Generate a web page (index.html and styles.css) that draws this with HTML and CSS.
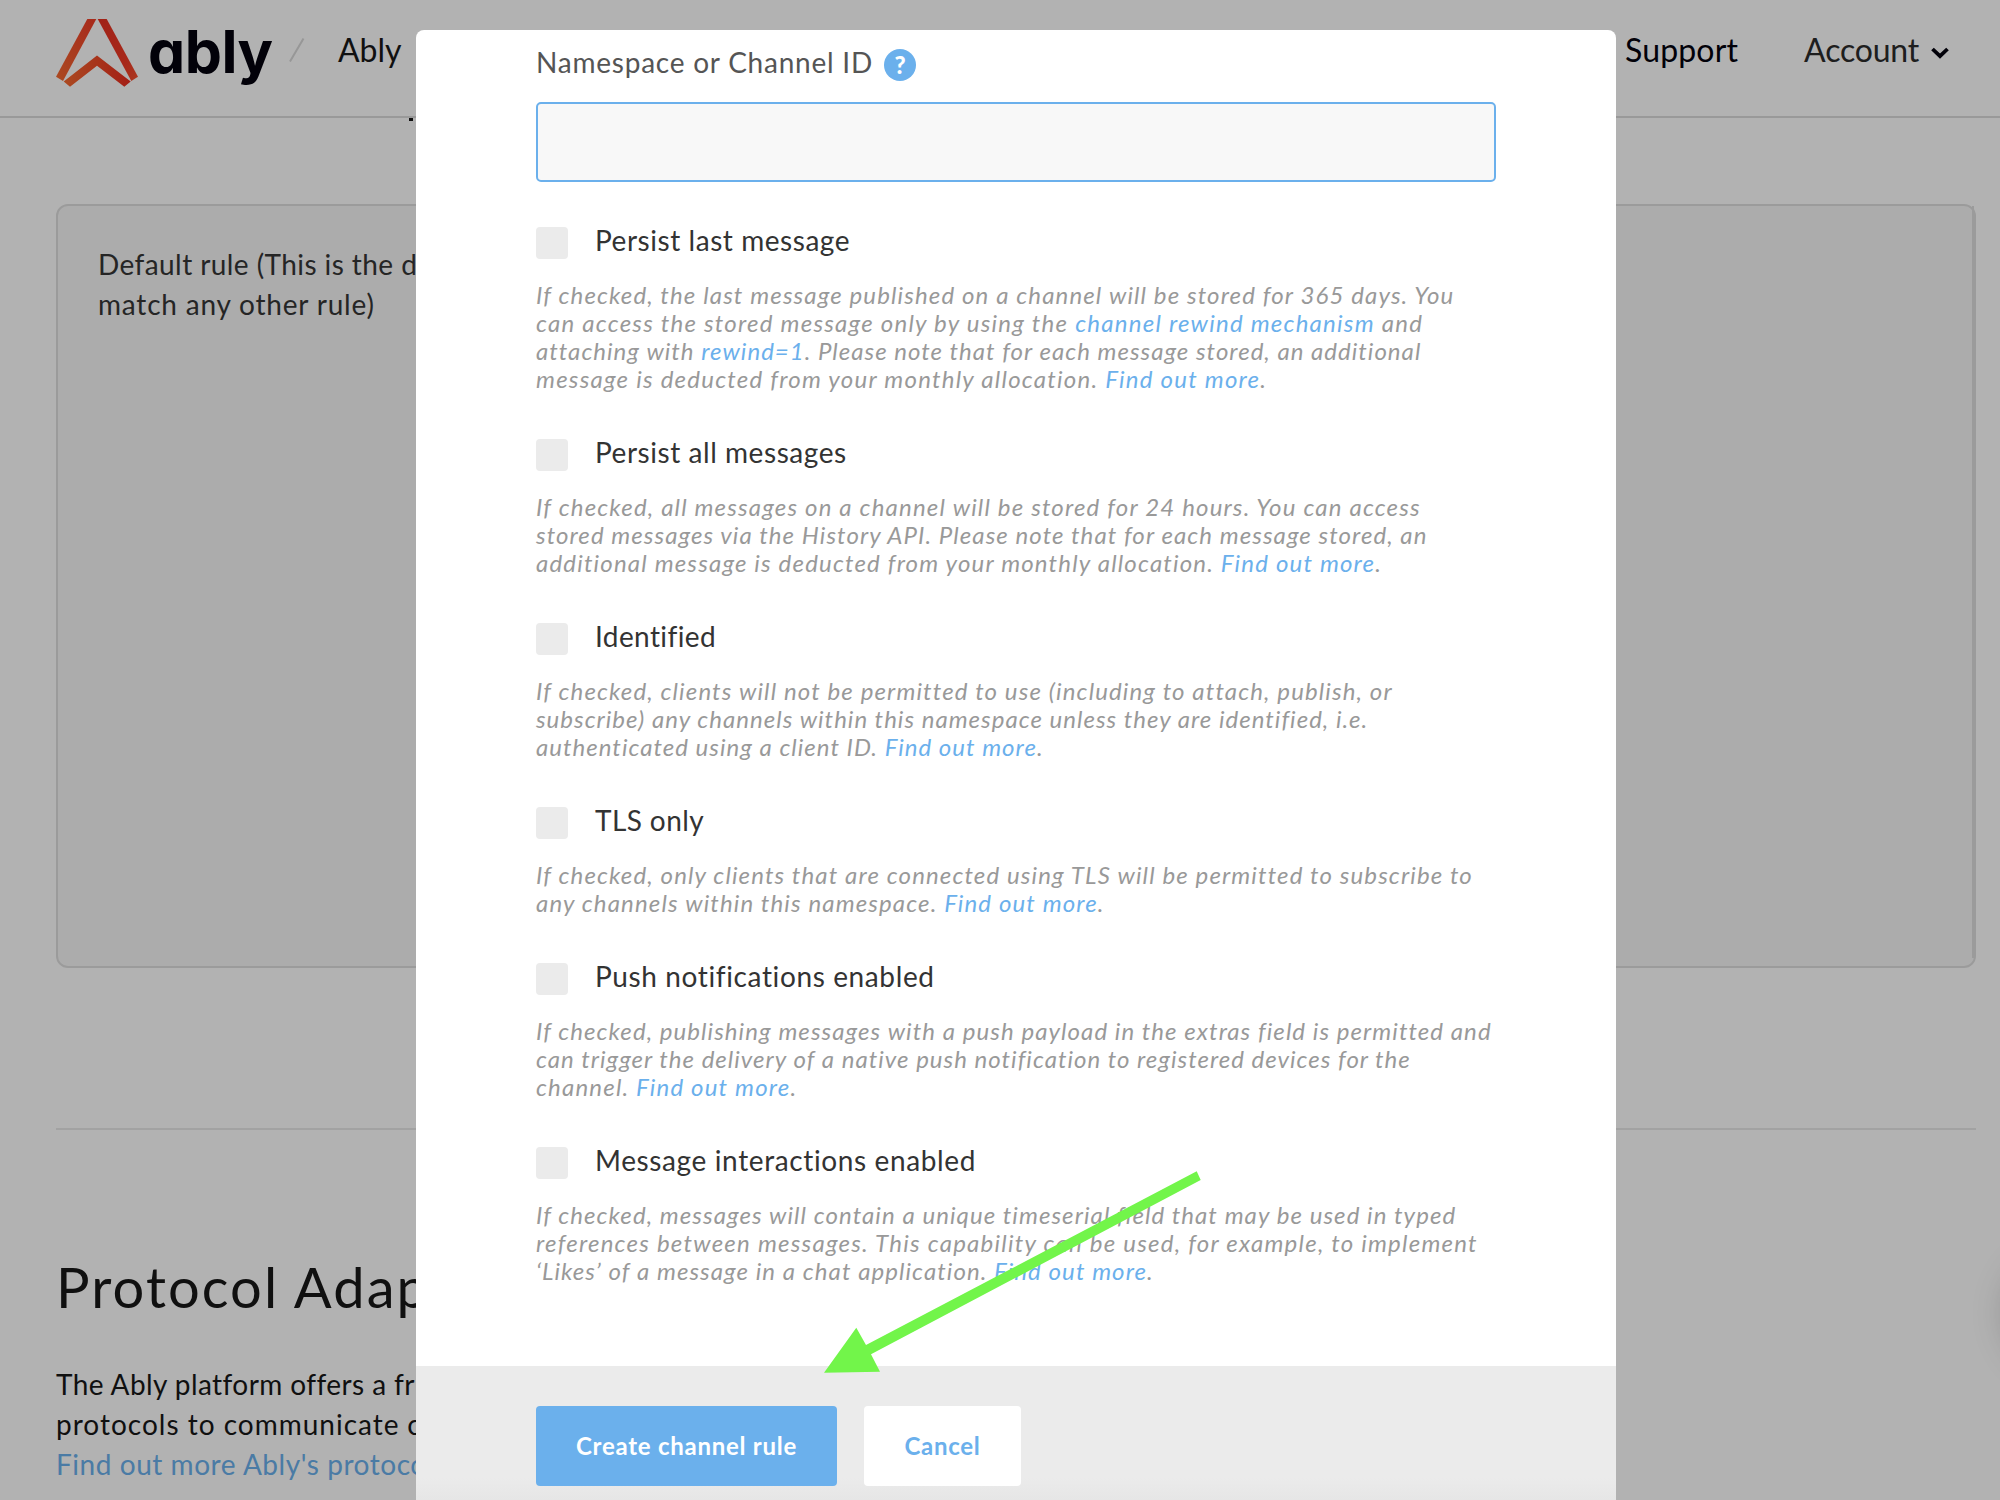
FILE: index.html
```html
<!DOCTYPE html>
<html lang="en">
<head>
<meta charset="utf-8">
<title>Ably – New channel rule</title>
<link rel="stylesheet" href="styles.css">
</head>
<body>
<div class="page">
  <header class="topbar">
    <a class="brand">
      <svg class="brand-mark" viewBox="0 0 82 68">
        <defs>
          <linearGradient id="leg-left" x1="0" y1="1" x2="1" y2="0"><stop offset="0" stop-color="#f56a30"/><stop offset="1" stop-color="#f03c28"/></linearGradient>
          <linearGradient id="leg-right" x1="0" y1="0" x2="1" y2="1"><stop offset="0" stop-color="#e63222"/><stop offset=".7" stop-color="#f03a26"/><stop offset="1" stop-color="#f5522f"/></linearGradient>
          <linearGradient id="chevron" x1="0" y1="0" x2="1" y2="0"><stop offset="0" stop-color="#f56a30"/><stop offset="1" stop-color="#ea2c20"/></linearGradient>
        </defs>
        <path fill="url(#leg-left)" d="M31.3 0H40.3L7 62 0 57.7z"/>
        <path fill="url(#leg-right)" d="M41.7 0H50.7L82 57.7 75.3 62z"/>
        <path fill="url(#chevron)" d="M41 36.6 74.7 62.6 68.3 67.7 41 46.7 14 67.7 7.7 62.6z"/>
      </svg>
      <span class="brand-name">ably</span>
    </a>
    <svg class="slash" viewBox="0 0 16 24"><path d="M1 23.5 14.5.5" fill="none" stroke="#d8d8d8" stroke-width="2"/></svg>
    <span class="crumb">Ably</span>
    <nav class="topnav">
      <a class="nav-dark">Support</a>
      <a class="account">Account
        <svg class="caret" viewBox="0 0 18 12"><path d="M1.5 2 9 9.2 16.5 2" fill="none" stroke="#03020d" stroke-width="3.8"/></svg>
      </a>
    </nav>
  </header>
  <i class="heading-tail"></i>
  <main class="content">
    <section class="rules"><div class="rules-body">
      <p class="rule-name"><span class="narrow">Default rule (This is the d</span><br><span class="wide">match any other rule)</span></p>
    </div></section>
    <section class="protocols">
      <h2>Protocol Adap</h2>
      <p><span class="narrow">The Ably platform offers a fr</span><br><span class="wider">protocols to communicate</span> c<br><a>Find out more Ably's protoco</a></p>
    </section>
  </main>
  <div class="side-widget"></div>
</div>
<div class="overlay">
  <form class="modal">
    <div class="fields">
      <label class="field-label">Namespace or Channel ID <span class="help">?</span></label>
      <input class="text-input" type="text">

      <div class="option">
        <label><span class="box"></span>Persist last message</label>
        <p><span class="s3">If checked, the last message published on a channel will be stored for 365 days. You</span><span class="s5">can access the stored message only by using the <a>channel rewind mechanism</a> and</span><span class="s1">attaching with <a>rewind=1</a>. Please note that for each message stored, an additional</span><span class="s5">message is deducted from your monthly allocation. <a>Find out more</a>.</span></p>
      </div>
      <div class="option">
        <label><span class="box"></span>Persist all messages</label>
        <p><span class="s4">If checked, all messages on a channel will be stored for 24 hours. You can access</span><span class="s2">stored messages via the History API. Please note that for each message stored, an</span><span class="s4">additional message is deducted from your monthly allocation. <a>Find out more</a>.</span></p>
      </div>
      <div class="option">
        <label class="tight"><span class="box"></span>Identified</label>
        <p><span class="s3">If checked, clients will not be permitted to use (including to attach, publish, or</span><span class="s1">subscribe) any channels within this namespace unless they are identified, i.e.</span><span class="s1">authenticated using a client ID. <a>Find out more</a>.</span></p>
      </div>
      <div class="option">
        <label class="tight"><span class="box"></span>TLS only</label>
        <p><span class="s3">If checked, only clients that are connected using TLS will be permitted to subscribe to</span><span class="s3">any channels within this namespace. <a>Find out more</a>.</span></p>
      </div>
      <div class="option">
        <label class="loose"><span class="box"></span>Push notifications enabled</label>
        <p><span class="s2">If checked, publishing messages with a push payload in the extras field is permitted and</span><span class="s1">can trigger the delivery of a native push notification to registered devices for the</span><span class="s4">channel. <a>Find out more</a>.</span></p>
      </div>
      <div class="option">
        <label class="loose"><span class="box"></span>Message interactions enabled</label>
        <p><span class="s2">If checked, messages will contain a unique timeserial field that may be used in typed</span><span class="s5">references between messages. This capability can be used, for example, to implement</span><span class="s2">‘Likes’ of a message in a chat application. <a>Find out more</a>.</span></p>
      </div>
    </div>
    <footer class="actions">
      <button class="btn primary" type="button">Create channel rule</button>
      <button class="btn plain" type="button">Cancel</button>
    </footer>
  </form>
</div>
<svg class="arrow" viewBox="0 0 380 205"><path fill="#72f54a" d="M374.7 1.3 378.7 10 49 184.3 58 201.7 2 202.7 34.3 157.7 44 175z"/></svg>
</body>
</html>
```
FILE: styles.css
```css
* { box-sizing: border-box; }
body {
  margin: 0;
  width: 2000px;
  height: 1500px;
  overflow: hidden;
  background: #fff;
  font-family: Lato, "Open Sans", sans-serif;
  font-size: 28px;
  line-height: 40px;
  letter-spacing: .55px;
  color: #181818;
}
p, h2 { margin: 0; }
.page { position: relative; width: 2000px; height: 1500px; overflow: hidden; }

/* Header */
.topbar {
  height: 118px;
  border-bottom: 2px solid #dbdbdb;
  padding: 19px 51px 0 56px;
  display: flex;
  align-items: flex-start;
  font-size: 32px;
  letter-spacing: 0;
}
.brand { display: flex; width: 233px; height: 68px; gap: 10px; }
.brand-mark { width: 82px; height: 68px; flex: none; }
.brand-name {
  font-family: Inter, sans-serif;
  font-weight: 700;
  font-size: 59px;
  line-height: 66px;
  letter-spacing: -.5px;
  font-feature-settings: "cv11";
  color: #03020d;
}
.slash { width: 16px; height: 24px; margin-top: 19px; }
.crumb { margin: 11px 0 0 33px; }
.topnav { margin: 11px 0 0 auto; display: flex; gap: 66px; }
.nav-dark { color: #03020d; letter-spacing: .15px; }
.account { display: flex; align-items: center; gap: 12px; color: #2b2b2b; letter-spacing: -.2px; }
.caret { width: 18px; height: 12px; margin-top: 5px; }
.heading-tail { position: absolute; left: 409px; top: 118px; width: 4px; height: 3px; background: #181818; }

/* Page body */
.content { padding: 86px 24px 0 56px; white-space: nowrap; }
.rules { height: 764px; border: 2px solid #dfdfdf; border-radius: 12px; background: #f7f7f7; }
.rules-body { height: 752px; border-right: 2px solid #dfdfdf; padding: 38px 40px; }
.rule-name { color: #363636; }
.narrow { letter-spacing: .42px; }
.wide { letter-spacing: .8px; }
.wider { letter-spacing: 1px; }
.protocols { margin-top: 160px; border-top: 2px solid #e9e9e9; padding-top: 121px; }
.protocols h2 { font-weight: 400; font-size: 56px; line-height: 72px; letter-spacing: 2.1px; margin-bottom: 41px; }
.protocols a { color: #6bb0ec; }
.side-widget {
  position: absolute;
  left: 2006px;
  top: 1253px;
  width: 120px;
  height: 120px;
  border-radius: 60px;
  box-shadow: 0 0 36px rgba(0, 0, 0, .2);
}

/* Modal */
.overlay { position: absolute; inset: 0; background: rgba(0, 0, 0, .3); padding-top: 30px; }
.modal { width: 1200px; height: 1470px; margin: 0 auto 0 416px; background: #fff; border-radius: 8px 8px 0 0; display: flex; flex-direction: column; overflow: hidden; }
.fields { height: 1336px; padding: 10px 120px 0; }
.field-label { display: flex; align-items: center; gap: 11px; height: 44px; color: #555; letter-spacing: .77px; }
.help {
  width: 32px;
  height: 32px;
  margin-top: 5px;
  border-radius: 50%;
  background: #6bb0ec;
  color: #fff;
  font-weight: 900;
  font-size: 24px;
  line-height: 32px;
  letter-spacing: 0;
  text-align: center;
}
.text-input { display: block; width: 960px; height: 80px; margin-top: 18px; border: 2px solid #6bb0ec; border-radius: 5px; background: #f8f8f8; outline: none; }
.option { margin-top: 38px; }
.option + .option { margin-top: 39px; }
.option label { display: flex; align-items: center; gap: 27px; height: 40px; color: #333; }
.option label.tight { letter-spacing: .4px; }
.option label.loose { letter-spacing: .62px; }
.box { width: 32px; height: 32px; margin-top: 6px; border-radius: 4px; background: #ebebeb; }
.option p { margin-top: 21px; font-size: 24px; line-height: 28px; font-style: italic; color: #999; white-space: nowrap; }
.option p span { display: block; }
.option a { color: #6bb0ec; }
/* tracking steps for the hint lines */
.s1 { letter-spacing: 1.02px; }
.s2 { letter-spacing: 1.07px; }
.s3 { letter-spacing: 1.13px; }
.s4 { letter-spacing: 1.18px; }
.s5 { letter-spacing: 1.24px; }

.actions {
  flex: 1;
  display: flex;
  align-items: flex-start;
  gap: 27px;
  padding: 40px 120px 0;
  background: linear-gradient(#ebebeb 0 112px, #e6e6e6 134px);
}
.btn { height: 80px; border: 0; border-radius: 4px; padding: 0 0 1px; font: 700 24px/32px Lato, sans-serif; letter-spacing: .74px; }
.primary { width: 301px; background: #6bb0ec; color: #fff; }
.plain { width: 157px; background: #fff; color: #6bb0ec; }

.arrow { position: absolute; left: 822px; top: 1170px; width: 380px; height: 205px; }
```
